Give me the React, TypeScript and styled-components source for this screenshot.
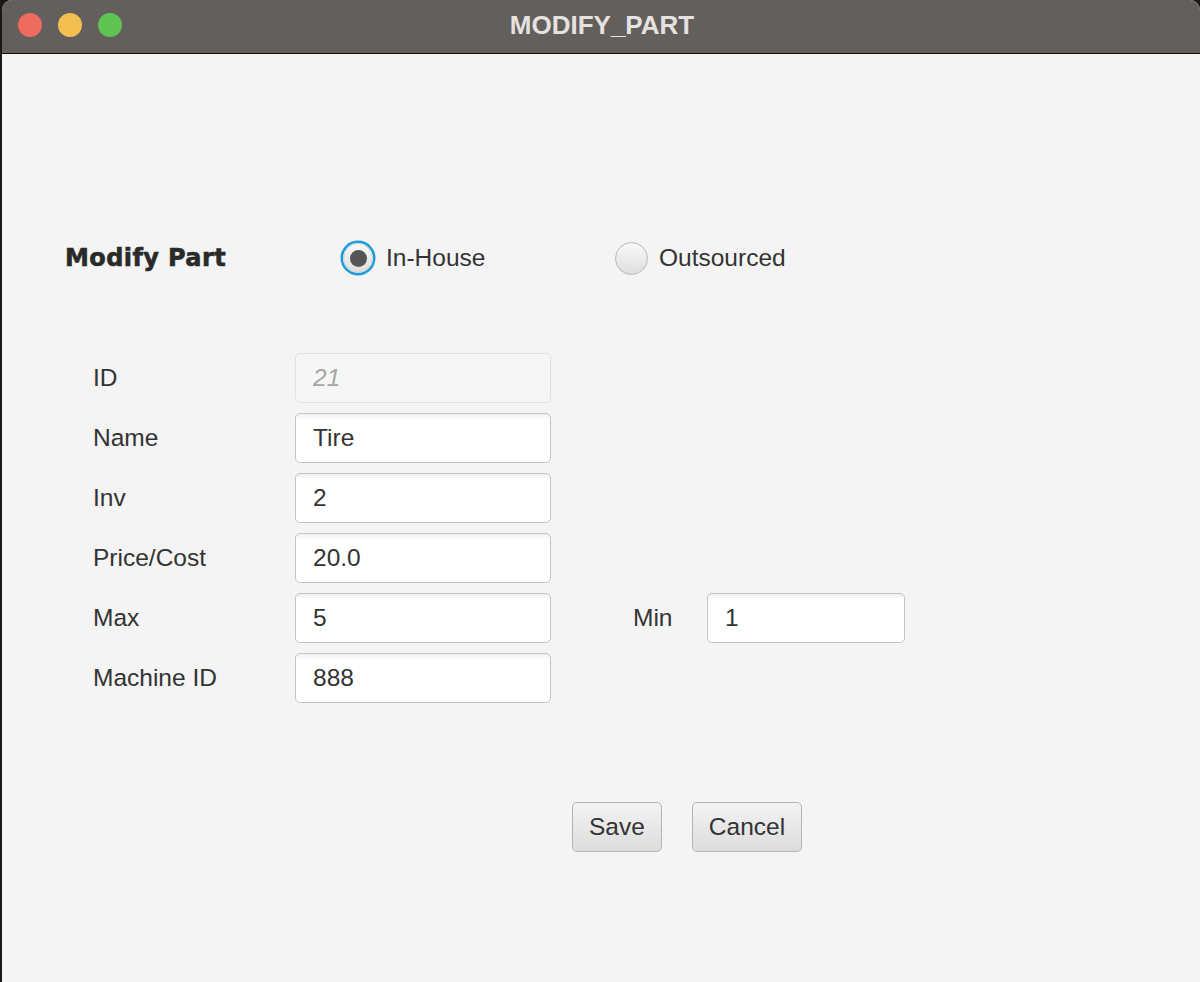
import React, { useState } from 'react';
import styled, { createGlobalStyle } from 'styled-components';

const GlobalStyle = createGlobalStyle`
  html, body {
    margin: 0;
    padding: 0;
    background: #1b1818;
  }
  body {
    font-family: "Liberation Sans", Arial, sans-serif;
  }
`;

const Window = styled.div`
  width: 1198px;
  height: 982px;
  margin-left: 2px;
  border-radius: 10px 10px 0 0;
  overflow: hidden;
  background: #f4f4f4;
  display: flex;
  flex-direction: column;
`;

const TitleBar = styled.div`
  position: relative;
  height: 53px;
  flex-shrink: 0;
  background: #635f5d;
  border-bottom: 1px solid #111;
  display: flex;
  align-items: center;
  justify-content: center;
`;

const Lights = styled.div`
  position: absolute;
  left: 16px;
  top: 13px;
  display: flex;
  gap: 16px;
`;

const Light = styled.span<{ color: string }>`
  width: 24px;
  height: 24px;
  border-radius: 50%;
  background: ${(p) => p.color};
`;

const WindowTitle = styled.div`
  font-family: "Liberation Sans", Arial, sans-serif;
  font-weight: bold;
  font-size: 26px;
  color: #e6e2e0;
  margin-left: 2px;
  margin-top: -2px;
`;

const Content = styled.div`
  padding: 186px 0 0 63px;
`;

const HeaderRow = styled.div`
  display: flex;
  align-items: center;
  height: 36px;
`;

const Heading = styled.div`
  width: 275px;
  font-family: "DejaVu Sans", sans-serif;
  font-weight: bold;
  font-size: 24px;
  letter-spacing: 0.4px;
  color: #2a2a2a;
  -webkit-text-stroke: 0.6px #2a2a2a;
`;

const RadioOption = styled.label<{ width?: number }>`
  display: flex;
  align-items: center;
  gap: 10px;
  width: ${(p) => (p.width ? `${p.width}px` : 'auto')};
  font-size: 24.5px;
  color: #333;
  cursor: pointer;
`;

const RadioBox = styled.span`
  width: 36px;
  height: 36px;
  display: flex;
  align-items: center;
  justify-content: center;
`;

const RadioCircle = styled.span<{ checked: boolean }>`
  width: ${(p) => (p.checked ? 30 : 33)}px;
  height: ${(p) => (p.checked ? 30 : 33)}px;
  box-sizing: border-box;
  border-radius: 50%;
  border: 1.5px solid ${(p) => (p.checked ? '#d0d0d0' : '#b8b8b8')};
  background: linear-gradient(#f9f9f9, #dedede);
  box-shadow: ${(p) => (p.checked ? '0 0 0 2.5px #1a9ddc' : 'none')};
  display: flex;
  align-items: center;
  justify-content: center;

  &::after {
    content: '';
    width: 17px;
    height: 17px;
    border-radius: 50%;
    background: #555;
    display: ${(p) => (p.checked ? 'block' : 'none')};
  }
`;

const Form = styled.div`
  margin-top: 77px;
  padding-left: 28px;
  display: flex;
  flex-direction: column;
  gap: 10px;
`;

const Row = styled.div`
  display: flex;
  align-items: center;
  height: 50px;
`;

const Label = styled.div<{ width: number }>`
  width: ${(p) => p.width}px;
  font-size: 24.5px;
  color: #333;
`;

const Field = styled.input<{ width: number }>`
  width: ${(p) => p.width}px;
  height: 50px;
  box-sizing: border-box;
  border: 1.5px solid #c4c4c4;
  border-radius: 5px;
  background: linear-gradient(#f0f0f0, #fff 6px);
  padding: 0 0 0 17px;
  font-family: "Liberation Sans", Arial, sans-serif;
  font-size: 24.5px;
  color: #333;
  outline: none;

  &:disabled {
    background: #f6f6f6;
    border-color: #e2e2e2;
    color: #a6a6a6;
    font-style: italic;
  }
`;

const Spacer = styled.div`
  width: 82px;
`;

const ButtonRow = styled.div`
  display: flex;
  gap: 30px;
  margin-top: 99px;
  padding-left: 507px;
`;

const Button = styled.button`
  height: 50px;
  padding: 0 16px;
  box-sizing: border-box;
  border: 1.5px solid #b4b4b4;
  border-radius: 5px;
  background: linear-gradient(#f3f3f3, #dddddd);
  font-family: "Liberation Sans", Arial, sans-serif;
  font-size: 24.5px;
  color: #333;
  cursor: pointer;
`;

const fields = [
  { label: 'ID', value: '21', disabled: true },
  { label: 'Name', value: 'Tire' },
  { label: 'Inv', value: '2' },
  { label: 'Price/Cost', value: '20.0' },
  { label: 'Max', value: '5', min: '1' },
  { label: 'Machine ID', value: '888' },
];

const App = () => {
  const [source, setSource] = useState<'in' | 'out'>('in');

  return (
    <>
      <GlobalStyle />
      <Window>
        <TitleBar>
          <Lights>
            <Light color="#ed6a5e" />
            <Light color="#f5bf4f" />
            <Light color="#5fc453" />
          </Lights>
          <WindowTitle>MODIFY_PART</WindowTitle>
        </TitleBar>
        <Content>
          <HeaderRow>
            <Heading>Modify Part</Heading>
            <RadioOption width={273} onClick={() => setSource('in')}>
              <RadioBox>
                <RadioCircle checked={source === 'in'} />
              </RadioBox>
              In-House
            </RadioOption>
            <RadioOption onClick={() => setSource('out')}>
              <RadioBox>
                <RadioCircle checked={source === 'out'} />
              </RadioBox>
              Outsourced
            </RadioOption>
          </HeaderRow>
          <Form>
            {fields.map((f) => (
              <Row key={f.label}>
                <Label width={202}>{f.label}</Label>
                <Field width={256} defaultValue={f.value} disabled={f.disabled} />
                {f.min && (
                  <>
                    <Spacer />
                    <Label width={74}>Min</Label>
                    <Field width={198} defaultValue={f.min} />
                  </>
                )}
              </Row>
            ))}
          </Form>
          <ButtonRow>
            <Button>Save</Button>
            <Button>Cancel</Button>
          </ButtonRow>
        </Content>
      </Window>
    </>
  );
};

export default App;
